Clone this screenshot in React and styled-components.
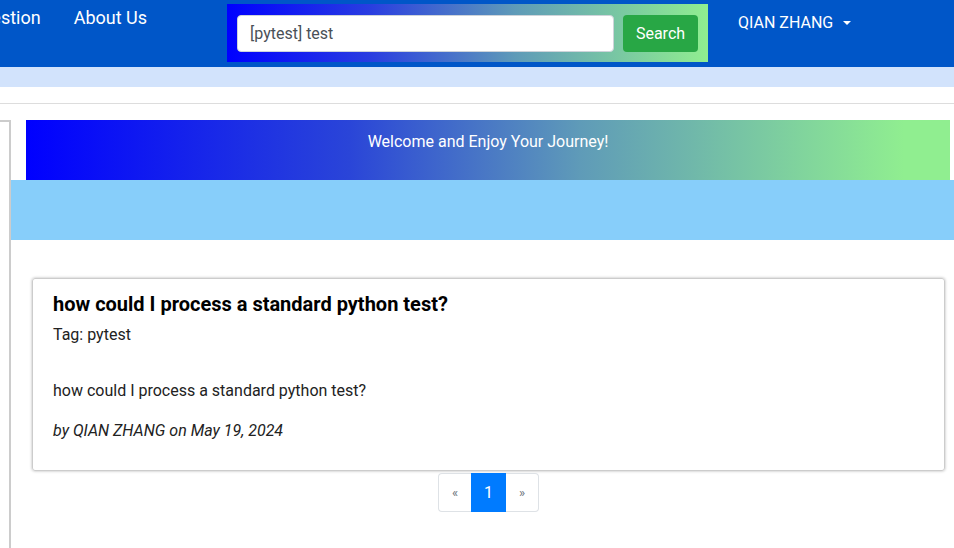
import React from 'react';
import styled, { createGlobalStyle } from 'styled-components';

const GlobalStyle = createGlobalStyle`
  body {
    margin: 0;
    font-family: Roboto, "Liberation Sans", sans-serif;
    background: #fff;
    overflow: hidden;
  }
  * { box-sizing: border-box; }
`;

const App = () => {
  return (
    <>
      <GlobalStyle />
      <Header>
        <NavClip>
          <NavLink>Ask Question</NavLink>
          <NavLink>About Us</NavLink>
        </NavClip>
        <SearchForm>
          <SearchInput defaultValue="[pytest] test" />
          <SearchButton>Search</SearchButton>
        </SearchForm>
        <UserMenu>
          QIAN ZHANG <Caret />
        </UserMenu>
      </Header>
      <SubBar />
      <Divider />
      <Body>
        <Sidebar />
        <Main>
          <Banner>Welcome and Enjoy Your Journey!</Banner>
          <Band />
          <Card>
            <Title>how could I process a standard python test?</Title>
            <Tag>Tag: pytest</Tag>
            <Text>how could I process a standard python test?</Text>
            <Meta>by QIAN ZHANG on May 19, 2024</Meta>
          </Card>
          <Pager>
            <PageItem>«</PageItem>
            <PageItem active>1</PageItem>
            <PageItem>»</PageItem>
          </Pager>
        </Main>
      </Body>
    </>
  );
};

const Header = styled.header`
  height: 67px;
  background: #0056c8;
  display: flex;
  align-items: flex-start;
`;

const NavClip = styled.nav`
  width: 147px;
  overflow: hidden;
  display: flex;
  justify-content: flex-end;
  gap: 33px;
  padding-top: 6px;
  flex-shrink: 0;
`;

const NavLink = styled.a`
  color: #fff;
  font-size: 18px;
  line-height: 24px;
  white-space: nowrap;
  flex-shrink: 0;
`;

const SearchForm = styled.form`
  margin: 4px 0 0 80px;
  width: 481px;
  height: 58px;
  background: linear-gradient(to right, #0000ff 0%, #2a3ee0 30%, #5f9bb8 60%, #90ee90 100%);
  display: flex;
  align-items: center;
  gap: 9px;
  padding: 0 10px;
  flex-shrink: 0;
`;

const SearchInput = styled.input`
  width: 377px;
  height: 37px;
  border: 1px solid #ced4da;
  border-radius: 4px;
  padding: 0 12px;
  font-family: Roboto, "Liberation Sans", sans-serif;
  font-size: 16px;
  color: #495057;
  outline: none;
`;

const SearchButton = styled.button`
  width: 75px;
  height: 37px;
  border: none;
  border-radius: 4px;
  background: #28a745;
  color: #fff;
  font-family: Roboto, "Liberation Sans", sans-serif;
  font-size: 16px;
`;

const UserMenu = styled.div`
  margin: 13px 0 0 30px;
  color: #fff;
  font-size: 16px;
  line-height: 20px;
  display: flex;
  align-items: center;
  gap: 6px;
  white-space: nowrap;
`;

const Caret = styled.span`
  width: 0;
  height: 0;
  border-left: 4px solid transparent;
  border-right: 4px solid transparent;
  border-top: 4px solid #fff;
  margin-left: 4px;
`;

const SubBar = styled.div`
  height: 20px;
  background: #d2e3fc;
`;

const Divider = styled.hr`
  margin: 16px 0 0;
  border: none;
  border-top: 1px solid #ddd;
`;

const Body = styled.div`
  display: flex;
  margin-top: 16px;
`;

const Sidebar = styled.aside`
  width: 11px;
  height: 440px;
  border-top: 2px solid #ccc;
  border-right: 2px solid #ccc;
  flex-shrink: 0;
`;

const Main = styled.main`
  flex: 1;
  display: flex;
  flex-direction: column;
`;

const Banner = styled.div`
  height: 60px;
  margin: 0 4px 0 15px;
  background: linear-gradient(to right, #0000ff 0%, #2a45d8 35%, #5f9bb8 60%, #90ee90 95%);
  color: #fff;
  font-size: 16px;
  text-align: center;
  padding-top: 12px;
`;

const Band = styled.div`
  height: 60px;
  background: #87cefa;
`;

const Card = styled.article`
  margin: 38px 9px 0 21px;
  height: 193px;
  border: 1px solid #ccc;
  border-radius: 3px;
  box-shadow: 0 0 3px rgba(0, 0, 0, 0.3);
  padding: 13px 20px;
  color: #222;
`;

const Title = styled.h2`
  margin: 0;
  font-size: 20px;
  line-height: 24px;
  font-weight: 700;
  color: #000;
`;

const Tag = styled.p`
  margin: 9px 0 0;
  font-size: 16px;
  line-height: 20px;
`;

const Text = styled.p`
  margin: 36px 0 0;
  font-size: 16px;
  line-height: 20px;
`;

const Meta = styled.p`
  margin: 20px 0 0;
  font-size: 16px;
  line-height: 20px;
  font-style: italic;
`;

const Pager = styled.ul`
  list-style: none;
  margin: 2px 0 0 12px;
  padding: 0;
  display: flex;
  justify-content: center;
`;

const PageItem = styled.li`
  padding: 8px 12px;
  font-size: ${(p) => (p.active ? '16px' : '13px')};
  line-height: 21px;
  min-width: ${(p) => (p.active ? '35px' : '33px')};
  text-align: center;
  background: ${(p) => (p.active ? '#007bff' : '#fff')};
  color: ${(p) => (p.active ? '#fff' : '#6c757d')};
  border: 1px solid ${(p) => (p.active ? '#007bff' : '#dee2e6')};
  &:first-child { border-radius: 4px 0 0 4px; border-right: none; }
  &:last-child { border-radius: 0 4px 4px 0; border-left: none; }
`;

export default App;
